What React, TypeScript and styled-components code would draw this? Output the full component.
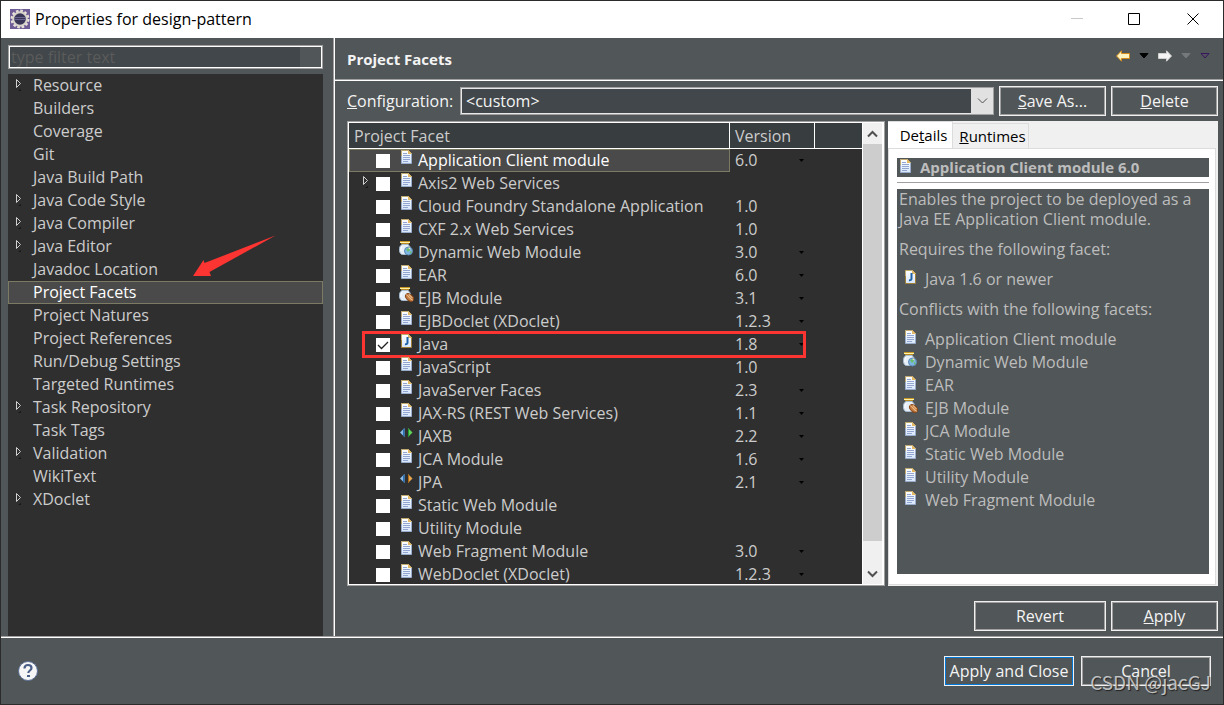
import React from 'react';
import styled, { createGlobalStyle, css } from 'styled-components';

const color = {
  frame: '#2b2b2b',
  panel: '#515658',
  field: '#41474a',
  list: '#2f2f2f',
  header: '#383d3f',
  text: '#cccccc',
  bright: '#f4f4f4',
  selected: '#4a4a4a',
  olive: '#7c7a62',
  edge: '#a0a0a0',
  red: '#fc3432',
};

const Global = createGlobalStyle`
  *, *::before, *::after { box-sizing: border-box; }
  body { margin: 0; }
  body, button, input, select {
    font-family: "Open Sans", "Noto Sans", sans-serif;
    font-size: 16px;
    line-height: 20px;
  }
  button, input, select { margin: 0; padding: 0; border: 0; background: none; color: inherit; }
  ul { list-style: none; margin: 0; padding: 0; }
  p { margin: 0; }
`;

const Window = styled.div`
  display: flex;
  flex-direction: column;
  height: 100vh;
  min-height: 480px;
  border: 1px solid ${color.frame};
  background: ${color.panel};
  color: ${color.text};
`;

const TitleBar = styled.header`
  display: flex;
  align-items: center;
  gap: 5px;
  flex: none;
  height: 37px;
  padding: 0 24px 2px 9px;
  background: #fff;
  color: #000;
`;

const WindowTitle = styled.h1`
  flex: 1;
  margin: 0;
  font-size: 16px;
  font-weight: 400;
`;

const WindowButtons = styled.div`
  display: flex;
  gap: 45px;
`;

const IconButton = styled.button`
  display: flex;
  align-items: center;
  justify-content: center;
`;

const Main = styled.div`
  display: flex;
  flex: 1;
  min-height: 0;
`;

const Sidebar = styled.nav`
  display: flex;
  flex-direction: column;
  flex: none;
  gap: 5px;
  width: 332px;
  padding: 7px 10px 0 7px;
`;

const Filter = styled.label`
  display: flex;
  flex: none;
  height: 24px;
  padding-right: 21px;
  border: 1px solid ${color.edge};
  box-shadow: inset 0 0 0 1px #fff;
`;

const FilterInput = styled.input`
  flex: 1;
  min-width: 0;
  margin: 1px;
  padding-left: 1px;
  background: ${color.field};
  outline: 0;
  &::placeholder { color: #5b5b5b; opacity: 1; }
`;

const Tree = styled.ul`
  position: relative;
  flex: 1;
  min-height: 0;
  background: ${color.list};
`;

const TreeItem = styled.li<{ $selected?: boolean }>`
  display: flex;
  height: 23px;
  padding: 0 7px;
  gap: 10px;
  line-height: 22px;
  ${(p) => p.$selected && css`
    background: ${color.selected};
    box-shadow: inset 0 0 0 1px ${color.olive};
    color: #fff;
  `}
`;

const Twisty = styled.span`
  display: flex;
  width: 8px;
  padding-top: 5px;
`;

const Pointer = styled.svg`
  position: absolute;
  left: 184px;
  top: 160px;
`;

const Page = styled.main`
  display: flex;
  flex-direction: column;
  flex: 1;
  min-width: 0;
  border-left: 1px solid ${color.edge};
  box-shadow: inset 1px 0 0 #fff;
  padding-left: 1px;
`;

const PageHeader = styled.div`
  display: flex;
  align-items: center;
  justify-content: space-between;
  flex: none;
  height: 43px;
  padding: 0 12px 0 12px;
  border-bottom: 1px solid #fff;
  box-shadow: inset 0 -1px 0 ${color.edge};
`;

const PageTitle = styled.h2`
  margin: 0;
  font-size: 15px;
  font-weight: 700;
  color: ${color.bright};
`;

const Tools = styled.div`
  display: flex;
  align-items: center;
  gap: 9px;
  padding: 0 1px 6px 0;
`;

const PageBody = styled.div`
  display: flex;
  flex-direction: column;
  flex: 1;
  min-height: 0;
  gap: 5px;
  padding: 5px 5px 5px 12px;
`;

const ConfigRow = styled.div`
  display: flex;
  align-items: center;
  gap: 5px;
  flex: none;
  color: ${color.bright};
`;

const ConfigLabel = styled.label`
  width: 108px;
`;

const SelectBox = styled.div`
  position: relative;
  display: flex;
  flex: 1;
  height: 28px;
  border: 1px solid ${color.edge};
  box-shadow: inset 0 0 0 1px #e8e8e8;
  background: ${color.field};
`;

const Select = styled.select`
  flex: 1;
  appearance: none;
  padding-left: 5px;
  outline: 0;
`;

const SelectArrow = styled.span`
  position: absolute;
  top: 0;
  right: 0;
  bottom: 0;
  display: flex;
  align-items: center;
  justify-content: center;
  width: 22px;
  background: #e1e1e1;
  pointer-events: none;
`;

const Button = styled.button<{ $width: number; $primary?: boolean }>`
  width: ${(p) => p.$width}px;
  height: 30px;
  border: 1px solid #f0f0f0;
  box-shadow: inset 0 0 0 1px ${(p) => (p.$primary ? '#0078d7' : color.edge)};
  color: ${color.bright};
  white-space: nowrap;
`;

const Split = styled.div`
  display: flex;
  flex: 1;
  min-height: 0;
  gap: 3px;
`;

const FacetFrame = styled.section`
  display: flex;
  flex: 1;
  min-width: 0;
  border: 1px solid ${color.edge};
  background: #fff;
  padding: 1px;
`;

const FacetClip = styled.div`
  flex: 1;
  min-width: 0;
  overflow: hidden;
  background: ${color.list};
`;

const FacetTable = styled.table`
  width: 100%;
  table-layout: fixed;
  border-collapse: separate;
  border-spacing: 0;
`;

const HeadCell = styled.th<{ $width?: number }>`
  width: ${(p) => (p.$width ? `${p.$width}px` : 'auto')};
  height: 26px;
  padding: 0 5px;
  border-right: 1px solid #fff;
  border-bottom: 1px solid #fff;
  background: ${color.header};
  font-weight: 400;
  text-align: left;
  &:last-child { border-right: 0; }
`;

const FacetRow = styled.tr`
  position: relative;
  height: 23px;
`;

const FacetCell = styled.td<{ $selected?: boolean }>`
  height: 23px;
  padding: 0;
  ${(p) => p.$selected && css`
    background: ${color.selected};
    box-shadow: inset 0 0 0 1px ${color.olive};
    color: #fff;
  `}
`;

const VersionCell = styled.td`
  padding: 0 11px 0 5px;
`;

const FacetLine = styled.div`
  display: flex;
  align-items: center;
  height: 23px;
  padding-left: 13px;
`;

const FacetTwisty = styled.span`
  display: flex;
  width: 14px;
  height: 15px;
`;

const CheckBox = styled.input`
  appearance: none;
  width: 14px;
  height: 14px;
  margin: 1px 9px 0 0;
  background: #fff;
  &:checked {
    background: #fff url("data:image/svg+xml,%3Csvg xmlns='http://www.w3.org/2000/svg' viewBox='0 0 14 14'%3E%3Cpath d='M2 7l3.500 3.500L12 4' fill='none' stroke='%23222' stroke-width='1.300'/%3E%3C/svg%3E");
  }
`;

const FacetIcon = styled.span`
  display: flex;
  align-self: flex-start;
  margin-right: 3px;
`;

const FacetLabel = styled.label`
  padding-bottom: 1px;
`;

const Version = styled.div`
  display: flex;
  align-items: center;
  justify-content: space-between;
  height: 23px;
  padding-bottom: 1px;
`;

const Highlight = styled.span`
  position: absolute;
  top: -2px;
  bottom: -2px;
  left: 13px;
  right: 56px;
  border: 3px solid ${color.red};
  pointer-events: none;
`;

const ScrollBar = styled.div`
  display: flex;
  flex-direction: column;
  flex: none;
  width: 21px;
  border: solid #fff;
  border-width: 0 1px;
  background: #f0f0f0;
`;

const ScrollButton = styled(IconButton)`
  height: 21px;
`;

const ScrollThumb = styled.div`
  flex: 397;
  background: #cdcdcd;
`;

const ScrollRest = styled.div`
  flex: 22;
`;

const DetailFolder = styled.section`
  display: flex;
  flex-direction: column;
  flex: none;
  width: 330px;
  background: #f0f0f0;
`;

const TabList = styled.div`
  display: flex;
  align-items: flex-end;
  flex: none;
  height: 27px;
  color: #000;
`;

const Tab = styled.button<{ $active?: boolean }>`
  height: ${(p) => (p.$active ? 27 : 25)}px;
  width: ${(p) => (p.$active ? 65 : 76)}px;
  border-right: 1px solid #dcdcdc;
  border-top: 1px solid #dcdcdc;
  background: ${(p) => (p.$active ? '#fff' : '#f0f0f0')};
  font-size: 15px;
  text-align: center;
  padding-left: ${(p) => (p.$active ? 7 : 4)}px;
  white-space: nowrap;
`;

const TabBody = styled.div`
  display: flex;
  flex-direction: column;
  flex: 1;
  min-height: 0;
  margin-right: 2px;
  margin-bottom: 1px;
  padding: 9px 6px 10px 8px;
  border: 1px solid #dcdcdc;
  background: #fff;
`;

const DetailTitle = styled.h3`
  display: flex;
  flex: none;
  gap: 6px;
  height: 19px;
  margin: 0;
  padding-left: 1px;
  background: ${color.panel};
  color: #bdbdbd;
  font-size: 15px;
  font-weight: 700;
  line-height: 19px;
`;

const Rule = styled.hr`
  flex: none;
  width: 100%;
  height: 1px;
  margin: 5px 0 6px;
  border: 0;
  background: ${color.edge};
`;

const DetailText = styled.div`
  flex: 1;
  min-height: 0;
  padding: 0 2px;
  background: ${color.panel};
  color: #bdbdbd;
`;

const FacetList = styled.ul`
  padding: 9px 4px 8px;
`;

const FacetListItem = styled.li`
  display: flex;
  gap: 6px;
  height: 23px;
  padding-top: 1px;
`;

const Gap = styled.div`
  height: 10px;
`;

const Actions = styled.div`
  display: flex;
  justify-content: flex-end;
  flex: none;
  gap: 5px;
  padding-top: 10px;
`;

const Footer = styled.footer`
  position: relative;
  display: flex;
  align-items: center;
  flex: none;
  gap: 7px;
  height: 68px;
  padding: 0 12px 0 17px;
  border-top: 1px solid ${color.edge};
  box-shadow: inset 0 1px 0 #fff;
`;

const Help = styled(IconButton)`
  margin-right: auto;
`;

const Watermark = styled.span`
  position: absolute;
  right: 12px;
  bottom: 10px;
  color: rgba(225, 225, 225, 0.8);
  font-family: "Noto Sans CJK SC", sans-serif;
  font-size: 19px;
  line-height: 24px;
  text-shadow: 1px 1px 1px #222;
  pointer-events: none;
`;

type IconKind = 'doc' | 'java' | 'web' | 'ejb' | 'jaxb' | 'jpa';

function Sheet({ java }: { java?: boolean }) {
  return (
    <svg width="16" height="16" viewBox="0 0 16 16">
      <defs>
        <linearGradient id="sheet" x1="0" y1="0" x2="0" y2="1">
          <stop offset="0" stopColor="#ffffff" />
          <stop offset="1" stopColor="#d6e6fa" />
        </linearGradient>
      </defs>
      <path d="M2.500 1.500h7l3 3v10h-10z" fill="url(#sheet)" stroke={java ? '#a08038' : '#9aaccb'} />
      <path d="M2.500 7V1.500h7l3 3" fill="none" stroke="#c0aa70" />
      <path d="M9 1l4 4H9z" fill="#e3b965" />
      {java ? (
        <path d="M8.500 4v5.500c0 1.500-1 2-2.500 1.700" fill="none" stroke="#1d62a8" strokeWidth="2" />
      ) : (
        <path d="M4 4.500h4M4 6.500h7M4 8.500h7M4 10.500h7M4 12.500h5" stroke="#93a6d2" />
      )}
    </svg>
  );
}

function Jar({ bean }: { bean?: boolean }) {
  return (
    <svg width="16" height="16" viewBox="0 0 16 16">
      <path d="M3 3.500C.5 5 .5 7 .5 9c0 3 1.500 4.500 3 4.500h5c2 0 3-2 3-4.500s-.5-4-2.500-5.500z" fill="#e6eff8" stroke="#a9bdd2" />
      <path d="M3 5c-1 1-1 3-1 5" stroke="#fff" fill="none" />
      <rect x="1" y="0" width="10" height="1" fill="#c79a28" />
      <rect x="1" y="1" width="10" height="1" fill="#fff0a8" />
      <rect x="2" y="2" width="8" height="1" fill="#b98a1e" />
      {bean ? (
        <g transform="rotate(40 10.500 10.500)">
          <ellipse cx="10.500" cy="10.500" rx="4.500" ry="3" fill="#c27a3e" stroke="#8a4618" />
          <path d="M6 10.500c3-1 5 1 9 0M8 8.500l5 .5" fill="none" stroke="#efc08d" />
        </g>
      ) : (
        <g>
          <circle cx="9.500" cy="10" r="4" fill="#7db6e2" stroke="#5d88b4" />
          <path d="M7 8l3-1 1 2-2 2zM11 10l2 1-2 2z" fill="#6cbd6a" />
          <path d="M9 7l2-.5.5 2z" fill="#fff3b0" />
        </g>
      )}
    </svg>
  );
}

function Diamonds({ right }: { right: [string, string] }) {
  return (
    <svg width="16" height="16" viewBox="0 0 16 16">
      <path d="M5.500 3v9L1 7.500z" fill="#8dbbe6" />
      <path d="M5.500 3v9L4 10.500v-6z" fill="#2a70b4" />
      <path d="M9 3v9l4.500-4.500z" fill={right[0]} />
      <path d="M9 3v9l1-1V4z" fill={right[1]} />
    </svg>
  );
}

function KindIcon({ kind }: { kind: IconKind }) {
  switch (kind) {
    case 'java': return <Sheet java />;
    case 'web': return <Jar />;
    case 'ejb': return <Jar bean />;
    case 'jaxb': return <Diamonds right={['#5fd35a', '#1f9a2c']} />;
    case 'jpa': return <Diamonds right={['#e9a850', '#b06c14']} />;
    default: return <Sheet />;
  }
}

function EclipseLogo() {
  return (
    <svg width="20" height="20" viewBox="0 0 20 20">
      <rect width="20" height="20" fill="#6f5b96" />
      <circle cx="10" cy="10" r="8.200" fill="none" stroke="#e6e2da" strokeWidth="2.600" strokeDasharray="2.600 1.693" />
      <circle cx="10" cy="10" r="6.800" fill="#3a3658" stroke="#d8d4cc" strokeWidth="2" />
      <path d="M4.500 8.500h11M4.300 10.500h11.400" stroke="#6a6390" />
    </svg>
  );
}

function TwistyIcon() {
  return (
    <svg width="8" height="14" viewBox="0 0 8 14">
      <path d="M1.500 .5v8l4-4z" fill="none" stroke="#d0d0d0" />
      <path d="M3 12l3-2v2z" fill="#161616" />
    </svg>
  );
}

function Triangle({ fill, stroke }: { fill: string; stroke?: string }) {
  return (
    <svg width="10" height="6" viewBox="0 0 10 6">
      <path d="M1 .5h8L5 5z" fill={fill} stroke={stroke ?? fill} />
    </svg>
  );
}

function Arrow({ forward }: { forward?: boolean }) {
  return (
    <svg width="14" height="12" viewBox="0 0 14 12">
      <path
        d={forward ? 'M13.500 6L8.500 .8V3.500h-8v5h8v2.700z' : 'M.5 6l5-5.200V3.500h8v5h-8v2.700z'}
        fill={forward ? '#f4f4f4' : '#fdf3c0'}
        stroke={forward ? '#d0d0d0' : '#d08a1c'}
      />
    </svg>
  );
}

function Chevron({ up, stroke = '#505050', weight = 2 }: { up?: boolean; stroke?: string; weight?: number }) {
  return (
    <svg width="11" height="8" viewBox="0 0 11 8">
      <path d={up ? 'M1 6.500l4.500-4.500L10 6.500' : 'M1 1.500L5.500 6 10 1.500'} fill="none" stroke={stroke} strokeWidth={weight} />
    </svg>
  );
}

const pages: { name: string; branch?: boolean }[] = [
  { name: 'Resource', branch: true },
  { name: 'Builders' },
  { name: 'Coverage' },
  { name: 'Git' },
  { name: 'Java Build Path' },
  { name: 'Java Code Style', branch: true },
  { name: 'Java Compiler', branch: true },
  { name: 'Java Editor', branch: true },
  { name: 'Javadoc Location' },
  { name: 'Project Facets' },
  { name: 'Project Natures' },
  { name: 'Project References' },
  { name: 'Run/Debug Settings' },
  { name: 'Targeted Runtimes' },
  { name: 'Task Repository', branch: true },
  { name: 'Task Tags' },
  { name: 'Validation', branch: true },
  { name: 'WikiText' },
  { name: 'XDoclet', branch: true },
];

interface Facet {
  name: string;
  version?: string;
  kind?: IconKind;
  choice?: boolean;
  branch?: boolean;
}

const facets: Facet[] = [
  { name: 'Application Client module', version: '6.0', choice: true },
  { name: 'Axis2 Web Services', branch: true },
  { name: 'Cloud Foundry Standalone Application', version: '1.0' },
  { name: 'CXF 2.x Web Services', version: '1.0' },
  { name: 'Dynamic Web Module', version: '3.0', kind: 'web', choice: true },
  { name: 'EAR', version: '6.0', choice: true },
  { name: 'EJB Module', version: '3.1', kind: 'ejb', choice: true },
  { name: 'EJBDoclet (XDoclet)', version: '1.2.3', choice: true },
  { name: 'Java', version: '1.8', kind: 'java', choice: true },
  { name: 'JavaScript', version: '1.0' },
  { name: 'JavaServer Faces', version: '2.3', choice: true },
  { name: 'JAX-RS (REST Web Services)', version: '1.1', choice: true },
  { name: 'JAXB', version: '2.2', kind: 'jaxb', choice: true },
  { name: 'JCA Module', version: '1.6', choice: true },
  { name: 'JPA', version: '2.1', kind: 'jpa', choice: true },
  { name: 'Static Web Module' },
  { name: 'Utility Module' },
  { name: 'Web Fragment Module', version: '3.0', choice: true },
  { name: 'WebDoclet (XDoclet)', version: '1.2.3', choice: true },
];

const conflicts: { name: string; kind: IconKind }[] = [
  { name: 'Application Client module', kind: 'doc' },
  { name: 'Dynamic Web Module', kind: 'web' },
  { name: 'EAR', kind: 'doc' },
  { name: 'EJB Module', kind: 'ejb' },
  { name: 'JCA Module', kind: 'doc' },
  { name: 'Static Web Module', kind: 'doc' },
  { name: 'Utility Module', kind: 'doc' },
  { name: 'Web Fragment Module', kind: 'doc' },
];

export default function App() {
  return (
    <>
      <Global />
      <Window>
        <TitleBar>
          <EclipseLogo />
          <WindowTitle>Properties for design-pattern</WindowTitle>
          <WindowButtons>
            <IconButton aria-label="Minimize">
              <svg width="12" height="12"><path d="M0 5.500h12" stroke="#c8c8c8" /></svg>
            </IconButton>
            <IconButton aria-label="Maximize">
              <svg width="14" height="12"><path d="M.5 .5h11v11h-11z" fill="none" stroke="#000" /></svg>
            </IconButton>
            <IconButton aria-label="Close">
              <svg width="12" height="12"><path d="M.5 .5l11 11M11.500 .5l-11 11" stroke="#000" /></svg>
            </IconButton>
          </WindowButtons>
        </TitleBar>

        <Main>
          <Sidebar>
            <Filter>
              <FilterInput type="text" placeholder="type filter text" aria-label="Filter" />
            </Filter>
            <Tree>
              {pages.map((page) => (
                <TreeItem key={page.name} $selected={page.name === 'Project Facets'}>
                  <Twisty>{page.branch && <TwistyIcon />}</Twisty>
                  {page.name}
                </TreeItem>
              ))}
              <Pointer width="84" height="44" viewBox="0 0 84 44">
                <path d="M83.500 1.500L12.500 29l-1-3L1 42h18l-1.500-4z" fill={color.red} />
              </Pointer>
            </Tree>
          </Sidebar>

          <Page>
            <PageHeader>
              <PageTitle>Project Facets</PageTitle>
              <Tools>
                <IconButton aria-label="Back"><Arrow /></IconButton>
                <IconButton aria-label="Back history"><Triangle fill="#000" /></IconButton>
                <IconButton aria-label="Forward"><Arrow forward /></IconButton>
                <IconButton aria-label="Forward history"><Triangle fill="#76797b" /></IconButton>
                <IconButton aria-label="Menu"><Triangle fill="#55505e" stroke="#35195c" /></IconButton>
              </Tools>
            </PageHeader>

            <PageBody>
              <ConfigRow>
                <ConfigLabel htmlFor="configuration"><u>C</u>onfiguration:</ConfigLabel>
                <SelectBox>
                  <Select id="configuration" defaultValue="custom">
                    <option value="custom">&lt;custom&gt;</option>
                  </Select>
                  <SelectArrow><Chevron weight={1} /></SelectArrow>
                </SelectBox>
                <Button $width={107}><u>S</u>ave As...</Button>
                <Button $width={107}><u>D</u>elete</Button>
              </ConfigRow>

              <Split>
                <FacetFrame>
                  <FacetClip>
                    <FacetTable>
                      <thead>
                        <tr>
                          <HeadCell>Project Facet</HeadCell>
                          <HeadCell $width={85}>Version</HeadCell>
                          <HeadCell $width={47} aria-label="Options" />
                        </tr>
                      </thead>
                      <tbody>
                        {facets.map((facet, i) => (
                          <FacetRow key={facet.name}>
                            <FacetCell $selected={i === 0}>
                              <FacetLine>
                                <FacetTwisty>{facet.branch && <TwistyIcon />}</FacetTwisty>
                                <CheckBox
                                  type="checkbox"
                                  id={`facet-${i}`}
                                  defaultChecked={facet.name === 'Java'}
                                />
                                <FacetIcon><KindIcon kind={facet.kind ?? 'doc'} /></FacetIcon>
                                <FacetLabel htmlFor={`facet-${i}`}>{facet.name}</FacetLabel>
                              </FacetLine>
                              {facet.name === 'Java' && <Highlight />}
                            </FacetCell>
                            <VersionCell>
                              <Version>
                                {facet.version}
                                {facet.choice && (
                                  <svg width="5" height="3"><path d="M0 0h5L2.500 3z" fill="#000" /></svg>
                                )}
                              </Version>
                            </VersionCell>
                            <td />
                          </FacetRow>
                        ))}
                      </tbody>
                    </FacetTable>
                  </FacetClip>
                  <ScrollBar>
                    <ScrollButton aria-label="Scroll up"><Chevron up /></ScrollButton>
                    <ScrollThumb />
                    <ScrollRest />
                    <ScrollButton aria-label="Scroll down"><Chevron /></ScrollButton>
                  </ScrollBar>
                </FacetFrame>

                <DetailFolder>
                  <TabList role="tablist">
                    <Tab role="tab" aria-selected="true" $active>De<u>t</u>ails</Tab>
                    <Tab role="tab" aria-selected="false"><u>R</u>untimes</Tab>
                  </TabList>
                  <TabBody>
                    <DetailTitle><Sheet />Application Client module 6.0</DetailTitle>
                    <Rule />
                    <DetailText>
                      <p>Enables the project to be deployed as a Java EE Application Client module.</p>
                      <Gap />
                      <p>Requires the following facet:</p>
                      <FacetList>
                        <FacetListItem><Sheet java />Java 1.6 or newer</FacetListItem>
                      </FacetList>
                      <p>Conflicts with the following facets:</p>
                      <FacetList>
                        {conflicts.map((facet) => (
                          <FacetListItem key={facet.name}>
                            <KindIcon kind={facet.kind} />
                            {facet.name}
                          </FacetListItem>
                        ))}
                      </FacetList>
                    </DetailText>
                  </TabBody>
                </DetailFolder>
              </Split>

              <Actions>
                <Button $width={132}>Revert</Button>
                <Button $width={107}><u>A</u>pply</Button>
              </Actions>
            </PageBody>
          </Page>
        </Main>

        <Footer>
          <Help aria-label="Help">
            <svg width="20" height="20" viewBox="0 0 20 20">
              <circle cx="10" cy="10" r="9.500" fill="#f6f6f6" stroke="#5a6f96" />
              <path d="M6.500 7.500C6.500 5 8 4 10 4s3.500 1.200 3.500 3c0 2.500-3.200 2.500-3.200 5" fill="none" stroke="#4a5f88" strokeWidth="2.200" />
              <rect x="9" y="14" width="3" height="2" fill="#4a5f88" />
            </svg>
          </Help>
          <Button $width={130} $primary>Apply and Close</Button>
          <Button $width={130}>Cancel</Button>
          <Watermark>CSDN @jacGJ</Watermark>
        </Footer>
      </Window>
    </>
  );
}
